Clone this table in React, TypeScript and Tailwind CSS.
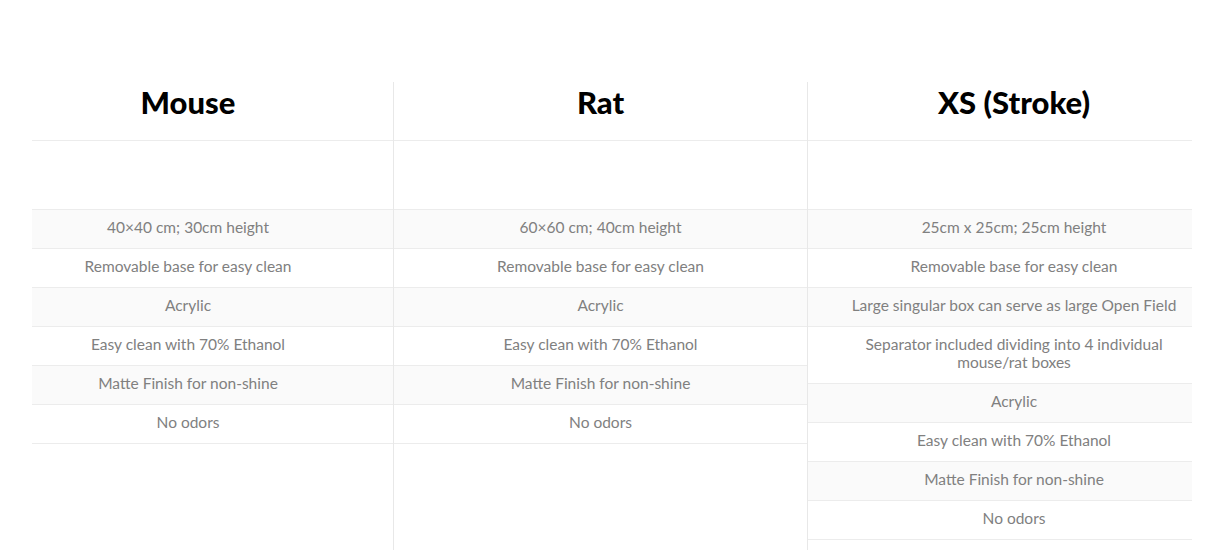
const columns = [
  {
    title: "Mouse",
    width: "w-[362px]",
    cell: "pr-[49px]",
    border: true,
    rows: [
      "40×40 cm; 30cm height",
      "Removable base for easy clean",
      "Acrylic",
      "Easy clean with 70% Ethanol",
      "Matte Finish for non-shine",
      "No odors",
    ],
  },
  {
    title: "Rat",
    width: "w-[414px]",
    cell: "px-3",
    border: true,
    rows: [
      "60×60 cm; 40cm height",
      "Removable base for easy clean",
      "Acrylic",
      "Easy clean with 70% Ethanol",
      "Matte Finish for non-shine",
      "No odors",
    ],
  },
  {
    title: "XS (Stroke)",
    width: "w-[384px]",
    cell: "pl-[28px]",
    border: false,
    rows: [
      "25cm x 25cm; 25cm height",
      "Removable base for easy clean",
      "Large singular box can serve as large Open Field",
      "Separator included dividing into 4 individual mouse/rat boxes",
      "Acrylic",
      "Easy clean with 70% Ethanol",
      "Matte Finish for non-shine",
      "No odors",
    ],
  },
];

export default function App() {
  return (
    <div className="min-h-[558px] bg-white pt-[82px] pl-[32px] font-['Lato',sans-serif]">
      <div className="flex h-[468px]">
        {columns.map((col) => (
          <div
            key={col.title}
            className={`${col.width} flex flex-col ${col.border ? "border-r border-[#e8e8e8]" : ""}`}
          >
            <div className={`h-[59px] border-b border-[#ececec] ${col.cell} pt-0 text-center`}>
              <h2 className="text-[31px] leading-[40px] font-black text-black">{col.title}</h2>
            </div>
            <div className="h-[69px] border-b border-[#ececec]" />
            {col.rows.map((r, i) => (
              <div
                key={r}
                className={`border-b border-[#ececec] pt-[8px] pb-[12px] text-center text-[15.5px] leading-[18px] text-[#808080] ${col.cell} ${
                  i % 2 === 0 ? "bg-[#fafafa]" : "bg-white"
                }`}
              >
                {r}
              </div>
            ))}
          </div>
        ))}
      </div>
    </div>
  );
}
